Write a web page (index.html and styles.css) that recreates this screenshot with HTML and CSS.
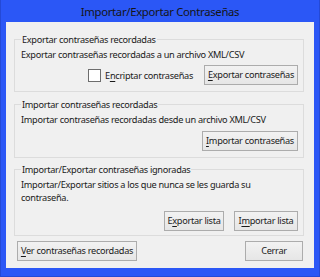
FILE: index.html
```html
<!DOCTYPE html>
<html lang="es">
<head>
<meta charset="utf-8">
<title>Importar/Exportar Contraseñas</title>
<link rel="stylesheet" href="styles.css">
</head>
<body>
<div class="window">
  <div class="titlebar">Importar/Exportar Contraseñas</div>
  <div class="client">
    <section class="group g1">
      <div class="group-title">Exportar contraseñas recordadas</div>
      <div class="line">Exportar contraseñas recordadas a un archivo XML/CSV</div>
      <div class="row">
        <label class="check"><span class="box"></span><span>E<u>n</u>criptar contraseñas</span></label>
        <button class="btn w-exp"><u>E</u>xportar contraseñas</button>
      </div>
    </section>
    <section class="group g2">
      <div class="group-title">Importar contraseñas recordadas</div>
      <div class="line">Importar contraseñas recordadas desde un archivo XML/CSV</div>
      <div class="row">
        <button class="btn w-imp"><u>I</u>mportar contraseñas</button>
      </div>
    </section>
    <section class="group g3">
      <div class="group-title">Importar/Exportar contraseñas ignoradas</div>
      <div class="para">Importar/Exportar sitios a los que nunca se les guarda su<br>contraseña.</div>
      <div class="row gap10">
        <button class="btn w-el">E<u>x</u>portar lista</button>
        <button class="btn w-il">I<u>m</u>portar lista</button>
      </div>
    </section>
    <div class="bottom">
      <button class="btn w-ver"><u>V</u>er contraseñas recordadas</button>
      <button class="btn w-cer">Cerrar</button>
    </div>
  </div>
</div>
</body>
</html>
```
FILE: styles.css
```css
html, body {
  margin: 0;
  padding: 0;
}
body {
  width: 320px;
  height: 277px;
  overflow: hidden;
  background: #2b57f6;
  font-family: "Noto Sans", "Open Sans", sans-serif;
  font-size: 9.2px;
  letter-spacing: -0.3px;
  color: #1a1a1a;
}
.window {
  width: 320px;
  height: 277px;
  box-sizing: border-box;
  padding: 0 6px 8px 6px;
  border: 1px solid #2449d6;
  border-top: none;
  display: flex;
  flex-direction: column;
}
.titlebar {
  height: 22px;
  line-height: 23px;
  text-align: center;
  font-size: 11.3px;
  color: #151515;
  margin: 0 -6px;
}
.client {
  flex: 1;
  background: #f0f0f0;
  padding: 17px 10px 0 8px;
  margin-left: -1px;
  margin-right: -1px;
}
.group {
  border: 1px solid #dcdcdc;
  padding: 0 5px 6px 6px;
}
.g2 { margin-top: 12px; }
.g3 { margin-top: 11px; padding-bottom: 4px; }
.group-title {
  margin-top: -8px;
  line-height: 15px;
  width: fit-content;
  background: #f0f0f0;
  padding: 0 1px;
}
.line {
  line-height: 15px;
}
.para {
  line-height: 13px;
  margin-top: 1px;
}
.row {
  display: flex;
  justify-content: flex-end;
  align-items: center;
  margin-top: 3px;
}
.g2 .row { margin-top: 4px; }
.g3 .row { margin-top: 7px; }
.gap10 { gap: 10px; }
.check {
  display: flex;
  align-items: center;
  gap: 4px;
  margin-right: 11px;
}
.box {
  width: 11px;
  height: 11px;
  border: 1px solid #6d6d6d;
  background: #fff;
}
.btn {
  font: inherit;
  letter-spacing: inherit;
  color: #1a1a1a;
  height: 20px;
  padding: 0;
  border: 1px solid #acacac;
  background: linear-gradient(#f2f2f2, #e6e6e6);
  text-align: center;
  line-height: 18px;
}
u { text-decoration-thickness: 1px; text-underline-offset: 2px; }
.w-exp { width: 94px; }
.w-imp { width: 96px; }
.w-el { width: 60px; }
.w-il { width: 64px; }
.w-ver { width: 120px; }
.w-cer { width: 58px; }
.bottom {
  display: flex;
  justify-content: space-between;
  margin-top: 5px;
  padding: 0 1px 0 3px;
}
```
